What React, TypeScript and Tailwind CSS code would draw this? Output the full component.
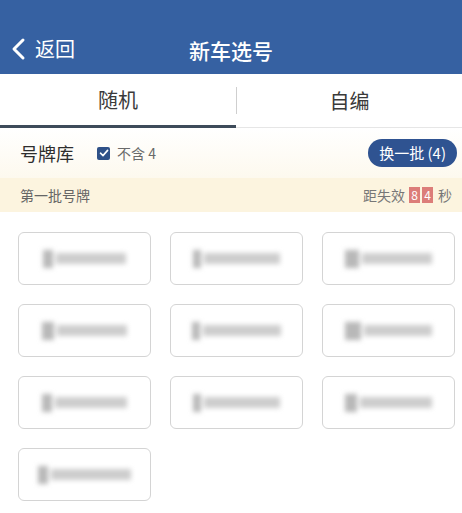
import React from 'react';

const font = { fontFamily: '"Noto Sans CJK SC", "Noto Sans", sans-serif' };

// blurred plate placeholders: [lead block width, rest width]
const plates: [number, number][] = [
    [10, 70],
    [8, 76],
    [14, 70],
    [12, 70],
    [8, 78],
    [16, 68],
    [10, 72],
    [8, 76],
    [12, 72],
    [10, 80],
];

function Plate({ lead, rest }: { lead: number; rest: number }) {
    return (
        <div className="h-[53px] rounded-[6px] border border-[#d4d4d4] bg-white flex items-center justify-center">
            <div className="flex items-center gap-[3px] blur-[2.5px]">
                <div className="h-[18px] bg-[#b8b8b8]" style={{ width: lead }} />
                <div className="h-[11px] bg-[#cdcdcd]" style={{ width: rest }} />
            </div>
        </div>
    );
}

export default function App() {
    return (
        <div className="w-[462px] h-[513px] bg-white overflow-hidden" style={font}>
            {/* Header */}
            <div className="h-[74px] bg-[#3661a2] flex items-end pb-[13px] relative">
                <div className="flex items-center pl-[9px] gap-[8px]">
                    <svg width="18" height="24" viewBox="0 0 18 24" fill="none">
                        <path d="M14 3 L5 12 L14 21" stroke="white" strokeWidth="3" strokeLinecap="round" strokeLinejoin="round" />
                    </svg>
                    <span className="text-white text-[20px] leading-none">返回</span>
                </div>
                <div className="absolute inset-x-0 bottom-[13px] text-center text-white text-[21px] leading-none font-medium">
                    新车选号
                </div>
            </div>

            {/* Tabs */}
            <div className="h-[54px] flex relative border-b border-[#e6e6e6]">
                <div className="w-[236px] flex items-center justify-center text-[20px] text-[#3a3a3a] border-b-[3px] border-[#3e4b5a] -mb-px">
                    随机
                </div>
                <div className="w-px my-[13px] bg-[#cfcfcf]" />
                <div className="flex-1 flex items-center justify-center text-[20px] text-[#3a3a3a]">
                    自编
                </div>
            </div>

            {/* Filter row */}
            <div className="bg-gradient-to-b from-white to-[#fdf9ee] h-[50px] flex items-center justify-between pl-[20px] pr-[5px]">
                <div className="flex items-center">
                    <span className="text-[18px] text-[#2e2e2e]">号牌库</span>
                    <span className="ml-[23px] w-[13px] h-[13px] rounded-[2px] bg-[#2f5188] flex items-center justify-center">
                        <svg width="10" height="10" viewBox="0 0 10 10" fill="none">
                            <path d="M1.5 5.2 L4 7.6 L8.6 2.4" stroke="white" strokeWidth="1.6" strokeLinecap="round" strokeLinejoin="round" />
                        </svg>
                    </span>
                    <span className="ml-[7px] text-[14px] text-[#6a6a6a]">不含 4</span>
                </div>
                <div className="h-[28px] px-[11px] rounded-full bg-[#2f5391] text-white text-[15px] flex items-center">
                    换一批 (4)
                </div>
            </div>

            {/* Batch bar */}
            <div className="h-[34px] bg-[#fcf4df] flex items-center justify-between pl-[20px] pr-[10px]">
                <span className="text-[14px] text-[#666]">第一批号牌</span>
                <div className="flex items-center text-[14px] text-[#777]">
                    <span>距失效</span>
                    <span className="ml-[4px] w-[11px] h-[16px] bg-[#dc7d79] text-white text-[12px] leading-[16px] text-center">8</span>
                    <span className="ml-[2px] w-[11px] h-[16px] bg-[#dc7d79] text-white text-[12px] leading-[16px] text-center">4</span>
                    <span className="ml-[5px]">秒</span>
                </div>
            </div>

            {/* Plates */}
            <div className="grid grid-cols-[repeat(3,133px)] gap-x-[19px] gap-y-[19px] px-[18px] pt-[20px]">
                {plates.map(([lead, rest], i) => (
                    <Plate key={i} lead={lead} rest={rest} />
                ))}
            </div>
        </div>
    );
}
